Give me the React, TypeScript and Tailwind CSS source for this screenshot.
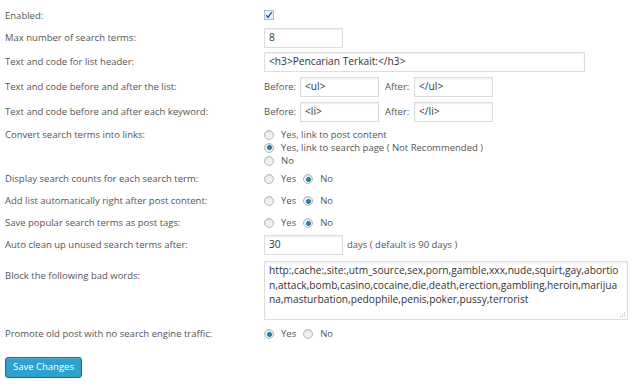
import React from "react";

const font = { fontFamily: '"Open Sans", "Noto Sans", sans-serif' };

function Radio({ checked }: { checked?: boolean }) {
  return (
    <span className="inline-flex w-[10px] h-[10px] rounded-full border border-[#b4b9be] bg-[#f1f1f1] items-center justify-center shrink-0 shadow-[inset_0_1px_1px_rgba(0,0,0,0.1)]">
      {checked && <span className="block w-[5px] h-[5px] rounded-full bg-[#1e8cbe] border border-[#16628a]" />}
    </span>
  );
}

function Input({ value, w }: { value: string; w: string }) {
  return (
    <div className={`${w} h-[20px] shrink-0 border border-[#dddddd] bg-white flex items-center px-[4px] text-[10.2px] text-[#333] shadow-[inset_0_1px_2px_rgba(0,0,0,0.07)]`}>
      {value}
    </div>
  );
}

function Row({ label, children, className = "", labelClass = "" }: { label: string; children: React.ReactNode; className?: string; labelClass?: string }) {
  return (
    <div className={`flex ${className}`}>
      <div className={`w-[259px] shrink-0 text-[#555] ${labelClass}`}>{label}</div>
      <div className="flex-1">{children}</div>
    </div>
  );
}

function YesNo({ yes }: { yes: boolean }) {
  return (
    <div className="flex items-center h-full">
      <Radio checked={yes} />
      <span className="ml-[7px]">Yes</span>
      <span className="ml-[7px]" />
      <Radio checked={!yes} />
      <span className="ml-[7px]">No</span>
    </div>
  );
}

function BeforeAfter({ before, after }: { before: string; after: string }) {
  return (
    <div className="flex items-center">
      <span className="w-[36px] shrink-0">Before:</span>
      <Input value={before} w="w-[79px]" />
      <span className="ml-[6px] w-[29px] shrink-0">After:</span>
      <Input value={after} w="w-[79px]" />
    </div>
  );
}

export default function App() {
  return (
    <div className="w-[640px] h-[389px] bg-white text-[9.5px] text-[#555] pl-[5px] overflow-hidden" style={font}>
      <Row label="Enabled:" className="mt-[6px] h-[20px] items-center">
        <span className="inline-flex w-[10px] h-[10px] border border-[#b4b9be] bg-[#eef0f3] items-center justify-center">
          <svg width="8" height="8" viewBox="0 0 8 8">
            <path d="M1.2 4.2 L3 6.3 L6.8 1.2" stroke="#1e5bb5" strokeWidth="1.4" fill="none" />
          </svg>
        </span>
      </Row>
      <Row label="Max number of search terms:" className="mt-[2px] h-[20px] items-center">
        <Input value="8" w="w-[79px]" />
      </Row>
      <Row label="Text and code for list header:" className="mt-[4px] h-[20px] items-center">
        <Input value="<h3>Pencarian Terkait:</h3>" w="w-[321px]" />
      </Row>
      <Row label="Text and code before and after the list:" className="mt-[5px] h-[20px] items-center">
        <BeforeAfter before="<ul>" after="</ul>" />
      </Row>
      <Row label="Text and code before and after each keyword:" className="mt-[5px] h-[20px] items-center">
        <BeforeAfter before="<li>" after="</li>" />
      </Row>
      <Row label="Convert search terms into links:" className="mt-[6px]" labelClass="leading-[13px]">
        <div className="flex flex-col leading-[13px]">
          <div className="flex items-center h-[13px]">
            <Radio />
            <span className="ml-[7px]">Yes, link to post content</span>
          </div>
          <div className="flex items-center h-[13px]">
            <Radio checked />
            <span className="ml-[7px]">Yes, link to search page ( Not Recommended )</span>
          </div>
          <div className="flex items-center h-[13px]">
            <Radio />
            <span className="ml-[7px]">No</span>
          </div>
        </div>
      </Row>
      <Row label="Display search counts for each search term:" className="mt-[2px] h-[20px] items-center">
        <YesNo yes={false} />
      </Row>
      <Row label="Add list automatically right after post content:" className="mt-[2px] h-[20px] items-center">
        <YesNo yes={false} />
      </Row>
      <Row label="Save popular search terms as post tags:" className="mt-[2px] h-[20px] items-center">
        <YesNo yes={false} />
      </Row>
      <Row label="Auto clean up unused search terms after:" className="mt-[2px] h-[20px] items-center">
        <div className="flex items-center">
          <Input value="30" w="w-[79px]" />
          <span className="ml-[4px]">days ( default is 90 days )</span>
        </div>
      </Row>
      <Row label="Block the following bad words:" className="mt-[6px]" labelClass="pt-[8px]">
        <div className="relative w-[364px] h-[59px] border border-[#dddddd] bg-white px-[4px] pt-[1px] text-[10.2px] leading-[14.5px] text-[#333] break-all shadow-[inset_0_1px_2px_rgba(0,0,0,0.07)]">
          http:,cache:,site:,utm_source,sex,porn,gamble,xxx,nude,squirt,gay,abortion,attack,bomb,casino,cocaine,die,death,erection,gambling,heroin,marijuana,masturbation,pedophile,penis,poker,pussy,terrorist
          <svg className="absolute right-[1px] bottom-[1px]" width="6" height="6" viewBox="0 0 6 6">
            <rect x="4" y="0" width="1" height="1" fill="#bbb" />
            <rect x="2" y="2" width="1" height="1" fill="#bbb" />
            <rect x="4" y="2" width="1" height="1" fill="#bbb" />
            <rect x="0" y="4" width="1" height="1" fill="#bbb" />
            <rect x="2" y="4" width="1" height="1" fill="#bbb" />
            <rect x="4" y="4" width="1" height="1" fill="#bbb" />
          </svg>
        </div>
      </Row>
      <Row label="Promote old post with no search engine traffic:" className="mt-[4px] h-[20px] items-center">
        <YesNo yes={true} />
      </Row>
      <div className="mt-[13px]">
        <button className="h-[21px] w-[77px] rounded-[3px] bg-[#2ea2cc] border border-[#0074a2] text-white text-[9.5px] flex items-center justify-center shadow-[inset_0_1px_0_rgba(120,200,230,0.5)]" style={font}>
          Save Changes
        </button>
      </div>
    </div>
  );
}
